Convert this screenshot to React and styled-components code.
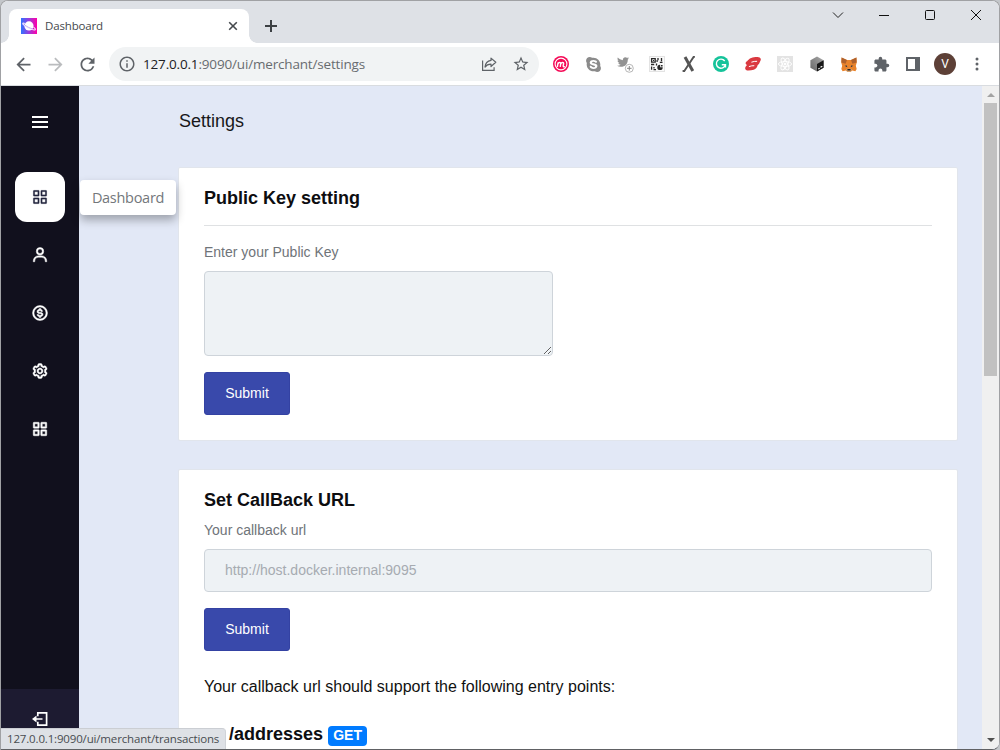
import React from 'react';
import styled, { createGlobalStyle, css } from 'styled-components';
import { BiMenu, BiGridAlt, BiUser, BiDollarCircle, BiCog } from 'react-icons/bi';
import { MdArrowBack, MdArrowForward, MdRefresh, MdInfoOutline, MdStarBorder, MdExtension } from 'react-icons/md';
import { FaSkype, FaTwitter } from 'react-icons/fa';

const uiFont = "'Open Sans', 'Noto Sans', sans-serif";
const pageFont = "'Liberation Sans', Arial, sans-serif";

const GlobalStyle = createGlobalStyle`
  * { box-sizing: border-box; }
  body { margin: 0; background: #c3c6ca; overflow: hidden; }
  svg { display: block; flex: none; }
`;

const Window = styled.div`
  width: 1000px;
  height: 750px;
  display: flex;
  flex-direction: column;
  overflow: hidden;
  border: 1px solid #a0a1a4;
  border-bottom-color: #606164;
  border-radius: 8px 8px 8px 0;
  background: #fff;
  font-family: ${pageFont};
`;

const TabStrip = styled.header`
  display: flex;
  flex: none;
  height: 42px;
  padding: 8px 0 0 8px;
  background: #dee1e6;
`;

const Tab = styled.div`
  position: relative;
  display: flex;
  align-items: center;
  width: 240px;
  height: 34px;
  padding: 0 10px 0 12px;
  border-radius: 8px 8px 0 0;
  background: #fff;
  &::before,
  &::after {
    content: '';
    position: absolute;
    bottom: 0;
    width: 8px;
    height: 8px;
  }
  &::before { left: -8px; background: radial-gradient(circle at 0 0, transparent 7.5px, #fff 8px); }
  &::after { right: -8px; background: radial-gradient(circle at 100% 0, transparent 7.5px, #fff 8px); }
`;

const TabTitle = styled.span`
  flex: 1;
  margin-left: 8px;
  font: 11.5px/16px ${uiFont};
  letter-spacing: -0.16px;
  color: #45494d;
`;

const NewTab = styled.div`
  padding: 10px 0 0 15px;
`;

const WindowControls = styled.div`
  display: flex;
  margin-left: auto;
`;

const Control = styled.div`
  display: flex;
  justify-content: center;
  width: 46px;
  height: 12px;
  align-items: center;
`;

const Toolbar = styled.nav`
  display: flex;
  align-items: center;
  flex: none;
  height: 43px;
  padding-left: 6px;
  border-bottom: 1px solid #d9dce0;
  background: #fff;
`;

const ToolCell = styled.div`
  display: flex;
  align-items: center;
  justify-content: center;
  flex: none;
  width: 32px;
  height: 32px;
  color: ${(p) => p.$color || '#5f6368'};
`;

const Omnibox = styled.div`
  display: flex;
  align-items: center;
  width: 430px;
  height: 34px;
  margin: 0 6px;
  padding: 0 2px 0 9px;
  border-radius: 17px;
  background: #f1f3f4;
  color: #5f6368;
`;

const Url = styled.span`
  flex: 1;
  margin-left: 7px;
  font: 13.5px/20px ${uiFont};
  letter-spacing: -0.17px;
  white-space: nowrap;
  color: #686c70;
  b { font-weight: 400; color: #202124; }
`;

const Avatar = styled.div`
  width: 22px;
  height: 22px;
  border-radius: 50%;
  background: #5d4037;
  color: #fff;
  font: 12px/22px Roboto, sans-serif;
  text-align: center;
`;

const Body = styled.div`
  position: relative;
  display: flex;
  flex: 1;
  min-height: 0;
  background: #e2e8f6;
`;

const Sidebar = styled.aside`
  display: flex;
  flex-direction: column;
  align-items: center;
  width: 78px;
  background: #11101d;
  color: #fff;
`;

const MenuToggle = styled.div`
  display: flex;
  align-items: center;
  height: 72px;
  margin-bottom: 14px;
`;

const NavItem = styled.div`
  position: relative;
  display: flex;
  align-items: center;
  justify-content: center;
  width: 50px;
  height: 50px;
  margin-bottom: 8px;
  border-radius: 12px;
  svg { stroke: currentColor; stroke-width: 0.6px; }
  ${(p) => p.$active && css`
    background: #fff;
    color: #24263f;
    svg { stroke-width: 0.2px; }
  `}
`;

const Tooltip = styled.span`
  position: absolute;
  left: 65px;
  top: 8px;
  width: 96px;
  height: 35px;
  border-radius: 4px;
  background: #fff;
  box-shadow: 0 5px 10px rgba(0, 0, 0, 0.3);
  color: #73777b;
  font: 14.5px/35px ${uiFont};
  letter-spacing: -0.29px;
  text-align: center;
  z-index: 2;
`;

const Logout = styled.div`
  display: flex;
  align-items: center;
  justify-content: center;
  width: 78px;
  height: 60px;
  margin-top: auto;
  background: #1d1b31;
`;

const Main = styled.main`
  flex: 1;
  height: 663px;
  overflow: hidden;
  padding: 24px 24px 0 99px;
`;

const PageTitle = styled.h1`
  margin: 0 0 35px 1px;
  font-size: 18px;
  line-height: 22px;
  font-weight: 400;
  color: #17171a;
`;

const Card = styled.section`
  height: ${(p) => p.$height}px;
  margin-bottom: 28px;
  padding: 19px 25px 0;
  border: 1px solid #e1e5ec;
  border-radius: 2px;
  background: #fff;
`;

const CardTitle = styled.h2`
  margin: 0;
  font-size: 18px;
  line-height: 22px;
  color: #0d0d10;
`;

const Rule = styled.hr`
  height: 1px;
  margin: 16px 0;
  border: 0;
  background: #dfe1e3;
`;

const Label = styled.label`
  display: block;
  height: 20px;
  margin: ${(p) => p.$top || 0}px 0 9px;
  font-size: 14px;
  line-height: 20px;
  color: #6f7479;
`;

const field = css`
  display: block;
  border: 1px solid #ced4da;
  border-radius: 4px;
  background: #eef2f5;
  font: 14px/20px ${pageFont};
  outline: 0;
`;

const KeyArea = styled.textarea`
  ${field}
  width: 349px;
  height: 85px;
  padding: 10px 20px;
`;

const UrlInput = styled.input`
  ${field}
  width: 100%;
  height: 43px;
  padding: 0 20px 2px;
  &::placeholder { color: #a6abb1; opacity: 1; }
`;

const Submit = styled.button`
  display: block;
  width: 86px;
  height: 43px;
  margin-top: 16px;
  padding: 0 0 2px;
  border: 1px solid #3442a3;
  border-radius: 3px;
  background: #3949ab;
  color: #fff;
  font: 14px/20px ${pageFont};
`;

const Note = styled.p`
  margin: 25px 0 24px;
  font-size: 16px;
  line-height: 22px;
  color: #111;
`;

const Endpoint = styled.div`
  display: flex;
  align-items: center;
  gap: 5px;
  padding-left: 25px;
  height: 24px;
  color: #0d0d10;
  font-size: 18px;
  line-height: 22px;
  font-weight: 700;
`;

const Method = styled.span`
  width: 39px;
  height: 20px;
  margin-top: 3px;
  border-radius: 4px;
  background: #007bff;
  color: #fff;
  font-size: 14px;
  line-height: 19px;
  text-align: center;
`;

const Scrollbar = styled.div`
  display: flex;
  flex-direction: column;
  align-items: center;
  justify-content: space-between;
  width: 17px;
  padding: 7px 0;
  background: #f0f0f0;
`;

const ScrollTop = styled.div`
  display: flex;
  flex-direction: column;
  align-items: center;
  gap: 6px;
`;

const Thumb = styled.div`
  width: 13px;
  height: 273px;
  background: #c1c1c1;
`;

const StatusBubble = styled.div`
  position: absolute;
  left: 0;
  bottom: 0;
  width: 225px;
  height: 21px;
  padding-left: 6px;
  border-top: 1px solid #cbced3;
  border-right: 1px solid #d0d3d8;
  border-top-right-radius: 4px;
  background: #dee1e6;
  color: #484c50;
  font: 11.5px/20px ${uiFont};
  letter-spacing: -0.16px;
  white-space: nowrap;
  z-index: 3;
`;

const Favicon = () => (
  <svg width="16" height="16" viewBox="0 0 16 16">
    <defs>
      <linearGradient id="fav" x1="0" y1="0" x2="1" y2="0">
        <stop offset="0" stopColor="#2f73ff" />
        <stop offset="0.5" stopColor="#9a3bdc" />
        <stop offset="1" stopColor="#ff00a8" />
      </linearGradient>
    </defs>
    <rect width="16" height="16" fill="url(#fav)" />
    <circle cx="8" cy="7.9" r="4.6" fill="#fff" />
    <path d="M3.9 5.6C1.3 4.2 0.9 5.2 3 7.2c2.500 2.300 8.500 5.200 10.800 4.700 1.200-.3.2-1.600-1.300-2.800" fill="none" stroke="#f2e4ff" strokeWidth="1.100" />
    <path d="M3.800 7c2.200 1.800 5.300 3.300 8.200 3.900" stroke="#b7a0ef" strokeWidth=".8" fill="none" />
  </svg>
);

const Share = () => (
  <svg width="16" height="16" viewBox="0 0 16 16" fill="none" stroke="#5f6368" strokeWidth="1.200">
    <path d="M1.600 4.500v9.900h11.500v-3.200" />
    <path d="M10 2.100l4.800 4.200L10 10.500V8.100c-3 0-4.700 1-6 3 .3-3.700 2.400-6.200 6-6.700z" strokeLinejoin="round" />
  </svg>
);

const MonoBadge = () => (
  <svg width="16" height="16" viewBox="0 0 16 16" fill="none" stroke="#fff">
    <circle cx="8" cy="8" r="8" fill="#f50b57" stroke="none" />
    <circle cx="8" cy="8" r="5.900" strokeWidth="1.100" />
    <path d="M4.300 11l.9-4.700M4.900 8c.8-2 3.100-2.100 2.800-.2l-.5 3M7.700 8c.9-2 3.200-2.100 2.900-.2l-.4 1.700c-.2 1.400.8 1.600 1.600.9" strokeWidth="1.400" />
  </svg>
);

const TwitterPlus = () => (
  <svg width="17" height="17" viewBox="0 0 17 17">
    <FaTwitter size={12} color="#929292" />
    <circle cx="12.300" cy="12.300" r="4" fill="#fff" stroke="#b5b5b5" />
    <path d="M12.300 10v4.600M10 12.300h4.600" stroke="#888" />
  </svg>
);

const QrCode = () => (
  <svg width="16" height="16" viewBox="0 0 16 16">
    <rect x=".5" y=".5" width="15" height="15" fill="#fafafa" stroke="#e3e3e3" />
    <g fill="none" stroke="#282828" strokeWidth="1.300">
      <path d="M2.600 2.600h3.600v3.600H2.600zM9 2v2.200M10.800 6.300h2.700M12.500 2v3.200M2 8.500h3.200M7.500 7.500v2M2.600 10.500v3.200M5 11v1.400M4.500 13.700H7" />
    </g>
    <path d="M4 4h1v1H4zM7.500 4h1.200v2H7.500z" fill="#282828" />
    <circle cx="11" cy="11.400" r="2.700" fill="#282828" />
    <path d="M11.200 8.300h3.200v3h-3.200z" fill="#fafafa" />
    <path d="M12 9h1.600v1.500H12z" fill="#282828" />
  </svg>
);

const XMark = () => (
  <svg width="14" height="16" viewBox="0 0 14 16" fill="none" stroke="#555">
    <path d="M3 .9L10.800 15" strokeWidth="3" />
    <path d="M12.900 .9h-1.300L2.300 15H.6" strokeWidth="1.900" />
  </svg>
);

const Grammar = () => (
  <svg width="16" height="16" viewBox="0 0 16 16" fill="none">
    <circle cx="8" cy="8" r="8" fill="#15c39a" />
    <path d="M11.700 5A4.600 4.600 0 1 0 12.400 8.900M8.800 8.800h3.700v2.700" stroke="#fff" strokeWidth="1.400" />
  </svg>
);

const RedRibbon = () => (
  <svg width="16" height="14" viewBox="0 0 16 14">
    <path d="M6.200 1C8.500.1 11.800 0 13.600.2c2.300.3 2.800 2.200 1.600 4-1 1.600-.8 2.900-2.500 3.900-.6 2.400-1.700 4-4 4.600-2 .6-4.600 1-6.700.7C-.2 13-.2 10.800.9 9.200L2 7.900C-.2 6.900.6 5 2.100 4.300 3.200 2.900 4.300 1.700 6.200 1z" fill="#da3940" />
    <path d="M6.400 5.200c2-.7 3.800-1 5.700-.9M3.900 9.600c1.900-.7 3.700-1 5.400-.9" fill="none" stroke="#fff" strokeWidth="1" />
  </svg>
);

const Atom = () => (
  <svg width="16" height="16" viewBox="0 0 16 16" fill="none" stroke="#fff" strokeWidth=".9">
    <rect width="16" height="16" fill="#e3e3e3" stroke="none" />
    <ellipse cx="8" cy="8" rx="6.600" ry="2.500" />
    <ellipse cx="8" cy="8" rx="6.600" ry="2.500" transform="rotate(60 8 8)" />
    <ellipse cx="8" cy="8" rx="6.600" ry="2.500" transform="rotate(120 8 8)" />
    <circle cx="8" cy="8" r="1" fill="#fff" />
  </svg>
);

const Cube = () => (
  <svg width="14" height="16" viewBox="0 0 14 16">
    <defs>
      <linearGradient id="cube" x1="0" y1="1" x2="1" y2="0">
        <stop offset="0" stopColor="#666" />
        <stop offset="1" stopColor="#aaa" />
      </linearGradient>
    </defs>
    <path d="M7 .5L13.600 4.200v7.500L7 15.500.4 11.700V4.200z" fill="url(#cube)" />
    <path d="M7 8l6.600-3.800v7.500L7 15.500z" fill="#171717" />
    <path d="M8.300 13l1.400-.8M10.500 11.300l1.800-1" stroke="#fff" strokeWidth="1.100" />
  </svg>
);

const Fox = () => (
  <svg width="16" height="15" viewBox="0 0 16 15">
    <path d="M.6.5L6 3h4l5.400-2.500.4 5-1 3.300.9 3.200-1.300 2.200-3.200-.7L9.500 15h-3l-1.700-1.500-3.200.7L.3 12l.9-3.200-1-3.300z" fill="#e9832b" />
    <path d="M.6.5L6 3l-1.400 3.800L.4 5.500zM15.400.5L10 3l1.400 3.800 4.200-1.300z" fill="#ae612c" />
    <path d="M3.600 8.800l2.400-.2.200 1.600zM12.400 8.800l-2.400-.2-.2 1.600z" fill="#23344a" />
    <path d="M5 12.600l1.700-.8h2.600l1.700.8L9.500 15h-3z" fill="#d9a878" />
    <path d="M6.500 12h3l.2 1.500H6.300z" fill="#252525" />
  </svg>
);

const SidePanel = () => (
  <svg width="14" height="14" viewBox="0 0 14 14">
    <path d="M0 0h14v14H0zM2 2v10h7V2z" fillRule="evenodd" fill="#5f6368" />
  </svg>
);

const Dots = () => (
  <svg width="4" height="14" viewBox="0 0 4 14" fill="#5f6368">
    <circle cx="2" cy="2" r="1.500" /><circle cx="2" cy="7" r="1.500" /><circle cx="2" cy="12" r="1.500" />
  </svg>
);

const LogoutIcon = () => (
  <svg width="16" height="14" viewBox="0 0 16 14" fill="none" stroke="#fff" strokeWidth="1.700">
    <path d="M5.800 4.200V.9h8.800v12.200H5.800V9.800M10.500 7H2" />
    <path d="M4.500 3.400L0 7l4.500 3.600z" fill="#fff" stroke="none" />
  </svg>
);

const Arrow = ({ down, color }) => (
  <svg width="8" height="4" viewBox="0 0 8 4">
    <path d={down ? 'M0 0h8L4 4z' : 'M0 4h8L4 0z'} fill={color} />
  </svg>
);

const extensions = [
  <MonoBadge />, <FaSkype size={17} color="#8b8b8b" />, <TwitterPlus />, <QrCode />, <XMark />, <Grammar />,
  <RedRibbon />, <Atom />, <Cube />, <Fox />, <MdExtension size={17} />, <SidePanel />, <Avatar>V</Avatar>, <Dots />,
];

const navIcons = [BiGridAlt, BiUser, BiDollarCircle, BiCog, BiGridAlt];

export default function App() {
  return (
    <>
      <GlobalStyle />
      <Window>
        <TabStrip>
          <Tab>
            <Favicon />
            <TabTitle>Dashboard</TabTitle>
            <svg width="12" height="12" viewBox="0 0 12 12" stroke="#45494d" strokeWidth="1.600">
              <path d="M2.200 2.200l7.600 7.600M9.800 2.200L2.200 9.800" />
            </svg>
          </Tab>
          <NewTab>
            <svg width="14" height="14" viewBox="0 0 14 14" stroke="#3c4043" strokeWidth="2">
              <path d="M7 1v12M1 7h12" />
            </svg>
          </NewTab>
          <WindowControls>
            <Control>
              <svg width="12" height="12" viewBox="0 0 12 12" fill="none" stroke="#222"><path d="M1 3.500l5 5 5-5" /></svg>
            </Control>
            <Control>
              <svg width="10" height="10" viewBox="0 0 10 10" stroke="#111"><path d="M0 5.500h10" /></svg>
            </Control>
            <Control>
              <svg width="10" height="10" viewBox="0 0 10 10" fill="none" stroke="#111"><rect x=".5" y=".5" width="9" height="9" rx="1" /></svg>
            </Control>
            <Control>
              <svg width="10" height="10" viewBox="0 0 10 10" stroke="#111"><path d="M0 0l10 10M10 0L0 10" /></svg>
            </Control>
          </WindowControls>
        </TabStrip>
        <Toolbar>
          <ToolCell><MdArrowBack size={21} /></ToolCell>
          <ToolCell $color="#babcbe"><MdArrowForward size={21} /></ToolCell>
          <ToolCell><MdRefresh size={21} /></ToolCell>
          <Omnibox>
            <MdInfoOutline size={18} />
            <Url><b>127.0.0.1</b>:9090/ui/merchant/settings</Url>
            <ToolCell><Share /></ToolCell>
            <ToolCell><MdStarBorder size={18} /></ToolCell>
          </Omnibox>
          {extensions.map((icon, i) => <ToolCell key={i}>{icon}</ToolCell>)}
        </Toolbar>
        <Body>
          <Sidebar>
            <MenuToggle><BiMenu size={24} /></MenuToggle>
            {navIcons.map((Icon, i) => (
              <NavItem key={i} $active={i === 0}>
                <Icon size={18} />
                {i === 0 && <Tooltip>Dashboard</Tooltip>}
              </NavItem>
            ))}
            <Logout><LogoutIcon /></Logout>
          </Sidebar>
          <Main>
            <PageTitle>Settings</PageTitle>
            <Card $height={274}>
              <CardTitle>Public Key setting</CardTitle>
              <Rule />
              <Label>Enter your Public Key</Label>
              <KeyArea />
              <Submit>Submit</Submit>
            </Card>
            <Card $height={400}>
              <CardTitle>Set CallBack URL</CardTitle>
              <Label $top={9}>Your callback url</Label>
              <UrlInput placeholder="http://host.docker.internal:9095" />
              <Submit>Submit</Submit>
              <Note>Your callback url should support the following entry points:</Note>
              <Endpoint>/addresses <Method>GET</Method></Endpoint>
            </Card>
          </Main>
          <Scrollbar>
            <ScrollTop>
              <Arrow color="#a3a3a3" />
              <Thumb />
            </ScrollTop>
            <Arrow down color="#505050" />
          </Scrollbar>
          <StatusBubble>127.0.0.1:9090/ui/merchant/transactions</StatusBubble>
        </Body>
      </Window>
    </>
  );
}
